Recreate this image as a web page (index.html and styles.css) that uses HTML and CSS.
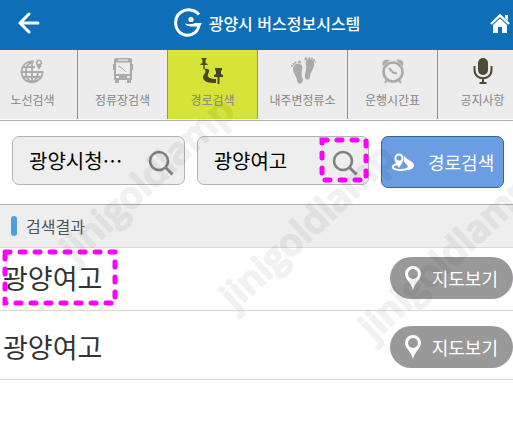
FILE: index.html
```html
<!DOCTYPE html>
<html lang="ko">
<head>
<meta charset="utf-8">
<meta name="viewport" content="width=device-width, initial-scale=1">
<title>광양시 버스정보시스템</title>
<link rel="stylesheet" href="styles.css">
</head>
<body>
<header class="topbar">
  <a class="back" href="#" aria-label="뒤로"><svg width="22" height="22" viewBox="0 0 22 22" fill="none" stroke="#fff" stroke-width="3" stroke-linecap="round" stroke-linejoin="round"><path d="M11 2 2 11l9 9M2.500 11H20"/></svg></a>
  <h1 class="brand">
    <svg width="30" height="30" viewBox="0 0 30 30" fill="none"><path d="M26 6.500C22 1 13 .5 7.500 4.500 1 9.500 1 20 7.500 25c7 5 17 1.500 18.500-8" stroke="#fff" stroke-width="3"/><path d="M12 15.500c3 1 7 1 10-.5h7l-2 3.500h-9c-3 0-5-1-6-3z" fill="#fff"/><circle cx="18" cy="11.500" r="2.600" fill="#fff"/></svg>
    <span>광양시 버스정보시스템</span>
  </h1>
  <a class="home" href="#" aria-label="홈"><svg width="22" height="21" viewBox="0 0 22 21"><path d="M2 11 11 2.500 20 11" fill="none" stroke="#fff" stroke-width="2.400"/><path d="M16 2h3v6l-3-3zM4 12l7-6.500 7 6.500v8h-5v-6H9v6H4z" fill="#fff"/></svg></a>
</header>

<nav class="tabs-wrap">
  <div class="tabs">
    <a class="tab" href="#">
      <svg width="28" height="28" viewBox="0 0 28 28" fill="none" stroke="#aaa" stroke-width="1.800"><path d="M15 4.500A10.500 10.500 0 1 0 23.500 14M12 5C5 10 5 20 12 25M13 5v20M14 25c4-3 5-7 5-11M4 10h12M3 15h20M4 20h17"/><path d="M20 14c-2-4-3.500-6-3.500-8.500a3.500 3.500 0 0 1 7 0c0 2.500-1.500 4.500-3.500 8.500z" fill="#aaa" stroke="#ececec" stroke-width="1"/><circle cx="20" cy="5.500" r="1.500" fill="#ececec" stroke="none"/></svg>
      <span>노선검색</span>
    </a>
    <a class="tab" href="#">
      <svg width="28" height="28" viewBox="0 0 28 28"><path d="M7 1h14q2 0 2 2v4h1v6h-1v10h-1v3h-4v-3h-8v3H6v-3H5V13H4V7h1V3q0-2 2-2z" fill="#aaa"/><path d="M9 2.500h10v1.200H9zM7 5.500h14V17H7z" fill="#ececec"/><path d="m9 9 4 2 4 4" fill="none" stroke="#aaa"/><path d="M7 19h3v2H7zM18 19h3v2h-3z" fill="#ececec"/></svg>
      <span>정류장검색</span>
    </a>
    <a class="tab tab-active" href="#" aria-current="page">
      <svg width="28" height="28" viewBox="0 0 28 28" fill="#46462c"><path d="M2.500 1h5v1l-1 1v3l2 1v1H5.700v4H4.300V8H1.500V7l2-1V3l-1-1zM16 11h7v2l-1 1v3l2 1v2h-3.500v7h-2v-7H15v-2l2-1v-3l-1-1z"/><path d="M5 12c4-1 6 1 5 3s-2 4 0 5.500 4 1.500 7 1.500v4c-7 0-13-1-13-6 0-3 5-5 1-8z"/></svg>
      <span>경로검색</span>
    </a>
    <a class="tab" href="#">
      <svg width="28" height="28" viewBox="0 0 28 28" fill="#aaa"><path d="M4 12c0-4 3-6 6-5 3 0 4 3 3 6-1 4 0 7 1 10 0 4-5 5-6 1 0-4-4-8-4-12zM17 8c-1-4 1-6 4-6 3 0 5 3 4 7-1 4-4 7-4 11-1 4-6 3-5-1 0-4 2-7 1-11z"/><circle cx="3" cy="9" r="1"/><circle cx="4.500" cy="7" r="1"/><circle cx="6.500" cy="5.700" r="1.100"/><circle cx="10.500" cy="5" r="1.600"/><circle cx="17" cy="1.800" r="1.600"/><circle cx="20.500" cy="1" r="1"/><circle cx="23" cy="1.600" r="1"/><circle cx="25" cy="3" r="1"/><circle cx="26.300" cy="5" r=".8"/></svg>
      <span>내주변정류소</span>
    </a>
    <a class="tab" href="#">
      <svg width="28" height="28" viewBox="0 0 28 28"><path d="M4 9C2 5 6 1 11 3zM24 9c2-4-2-8-7-6z" fill="#aaa"/><circle cx="14" cy="15" r="9.500" fill="none" stroke="#aaa" stroke-width="2.600"/><path d="M10 11l4 4.500 4 1M8 23l-2 3M20 23l2 3" fill="none" stroke="#aaa" stroke-width="2"/></svg>
      <span>운행시간표</span>
    </a>
    <a class="tab" href="#">
      <svg width="28" height="28" viewBox="0 0 28 28"><rect x="9" y="1" width="10" height="17" rx="5" fill="#4b4b38"/><path d="M5.500 9v4c0 11 17 11 17 0V9M14 21v5M10.500 26h7" fill="none" stroke="#4b4b38" stroke-width="2"/></svg>
      <span>공지사항</span>
    </a>
  </div>
</nav>

<main>
  <form class="search">
    <div class="field">
      <input type="text" aria-label="출발지" value="광양시청…">
      <button class="lens" type="button" aria-label="출발지 검색"><svg width="26" height="26" viewBox="0 0 26 26" fill="none" stroke="#808080" stroke-width="2.600"><circle cx="11" cy="11" r="9"/><path d="m17 17 7.500 7.500" stroke-width="3"/></svg></button>
    </div>
    <div class="field">
      <input type="text" aria-label="도착지" value="광양여고">
      <button class="lens" type="button" aria-label="도착지 검색"><svg width="26" height="26" viewBox="0 0 26 26" fill="none" stroke="#808080" stroke-width="2.600"><circle cx="11" cy="11" r="9"/><path d="m17 17 7.500 7.500" stroke-width="3"/></svg></button>
      <svg class="mark mark-lens" aria-hidden="true"><rect x="3" y="3" width="44" height="40"/></svg>
    </div>
    <button class="route" type="submit">
      <svg width="24" height="20" viewBox="0 0 24 20"><path d="M6 12c-7 2-5 6 4 6 5 0 7-1 9-2" fill="none" stroke="#fff" stroke-width="2"/><path d="M8 16C5 11 3.500 9 3.500 6a4.500 4.500 0 0 1 9 0c0 3-1.500 5-4.500 10z" fill="#fff"/><circle cx="8" cy="6" r="2.600" fill="#6b9de3"/><path d="M18 1.500c-4 0-5 2.500-3 4.500s8 3.500 8 7.500-6 5.500-12 3.500c5 0 7-2 5-4s-4-4-3-7.500c1-3 3-4.500 5-4z" fill="#fff"/></svg>
      <span>경로검색</span>
    </button>
  </form>

  <h2 class="section">검색결과</h2>
  <ul class="results">
    <li class="result">
      <span class="name">광양여고</span>
      <button class="map" type="button"><svg width="16" height="24" viewBox="0 0 16 24"><path d="M8 24C6.500 17 0 13 0 8a8 8 0 0 1 16 0c0 5-6.500 9-8 16z" fill="#fff"/><circle cx="8" cy="8" r="5" fill="#999"/></svg><span>지도보기</span></button>
      <svg class="mark mark-name" aria-hidden="true"><rect x="3" y="3" width="110" height="51"/></svg>
    </li>
    <li class="result">
      <span class="name">광양여고</span>
      <button class="map" type="button"><svg width="16" height="24" viewBox="0 0 16 24"><path d="M8 24C6.500 17 0 13 0 8a8 8 0 0 1 16 0c0 5-6.500 9-8 16z" fill="#fff"/><circle cx="8" cy="8" r="5" fill="#999"/></svg><span>지도보기</span></button>
    </li>
  </ul>
</main>

<svg class="watermark" aria-hidden="true">
  <g><text transform="translate(75 264) rotate(-43)">jinigoldlamp</text></g>
  <g><text transform="translate(235 311) rotate(-43)">jinigoldlamp</text></g>
  <g><text transform="translate(374 342) rotate(-43)">jinigoldlamp</text></g>
</svg>
</body>
</html>
```
FILE: styles.css
```css
* { box-sizing: border-box; }

body {
  position: relative;
  min-height: 100vh;
  margin: 0;
  overflow-x: hidden;
  background: #fff;
  color: #333;
  font-family: "Noto Sans CJK KR", "Noto Sans", sans-serif;
}

a { color: inherit; text-decoration: none; }
svg { display: block; flex: none; }
button, input { font-family: inherit; padding: 0; border: 0; }

.topbar {
  display: flex;
  align-items: center;
  justify-content: space-between;
  height: 50px;
  padding: 0 2px 4px 18px;
  background: #0e6eb8;
  color: #fff;
}

.brand {
  display: flex;
  align-items: center;
  gap: 6px;
  margin: 0;
  padding-left: 4px;
  font-size: 16px;
  line-height: 24px;
  font-weight: 500;
}

.tabs-wrap {
  overflow: hidden;
  border-bottom: 1px solid #b4b4b4;
}

.tabs {
  display: grid;
  grid-template-columns: repeat(6, 1fr);
  margin: 0 -15px 0 -12px;
  padding-bottom: 1px;
}

.tab {
  display: flex;
  flex-direction: column;
  align-items: center;
  gap: 5px;
  height: 69px;
  padding-top: 7px;
  border-right: 1px solid #909090;
  background: #ececec;
  color: #858585;
  font-size: 12px;
  line-height: 20px;
}

.tab-active { background: #d5e437; }

.search {
  display: grid;
  grid-template-columns: minmax(0, 173fr) minmax(0, 173fr) minmax(0, 123fr);
  align-items: start;
  gap: 12px;
  padding: 15px 9px 16px 12px;
}

.field {
  position: relative;
  display: flex;
  align-items: center;
  height: 49px;
  padding: 0 10px 0 16px;
  border: 1px solid #b4b4b4;
  border-radius: 7px;
  background: #eee;
}

.field input {
  flex: 1;
  width: 100%;
  min-width: 0;
  height: 40px;
  background: transparent;
  color: #000;
  font-size: 20px;
}

.lens { padding-top: 4px; background: none; }

.mark {
  position: absolute;
  overflow: visible;
  fill: none;
  stroke: #f0f;
  stroke-width: 5px;
  stroke-linecap: round;
  stroke-dasharray: 5 10;
}

.mark-lens { right: -1px; top: 0; width: 50px; height: 46px; }
.mark-name { left: 2px; top: 1px; width: 116px; height: 57px; }

.route {
  display: flex;
  align-items: center;
  justify-content: center;
  gap: 13px;
  height: 52px;
  border: 1px solid #3a62a0;
  border-radius: 7px;
  background: #6b9de3;
  color: #fff;
  font-size: 18px;
}

.section {
  display: flex;
  align-items: center;
  gap: 9px;
  height: 44px;
  margin: 0;
  padding-left: 11px;
  border-top: 1px solid #b4b4b4;
  border-bottom: 1px solid #d8d8d8;
  background: #eee;
  color: #4c5560;
  font-size: 16px;
  line-height: 24px;
  font-weight: 400;
}

.section::before {
  content: "";
  width: 6px;
  height: 20px;
  border-radius: 3px;
  background: #4a9fdf;
}

.results { margin: 0; padding: 0; list-style: none; }

.result {
  position: relative;
  display: flex;
  align-items: center;
  justify-content: space-between;
  padding: 15px 0 11px 3px;
  border-bottom: 1px solid #d8d8d8;
}

.result:first-child { padding-top: 9px; }

.name { font-size: 27px; line-height: 40px; }

.map {
  display: flex;
  align-items: center;
  gap: 11px;
  height: 42px;
  padding: 0 15px;
  border-radius: 21px;
  background: #999;
  color: #fff;
  font-size: 18px;
}

.watermark {
  position: absolute;
  inset: 0;
  width: 100%;
  height: 100%;
  overflow: hidden;
  pointer-events: none;
  font-family: "Open Sans", sans-serif;
  font-size: 37px;
  font-weight: 600;
  fill: #000;
  stroke: #000;
  stroke-width: 2px;
  stroke-linejoin: round;
}

.watermark g { opacity: 0.05; }
```
